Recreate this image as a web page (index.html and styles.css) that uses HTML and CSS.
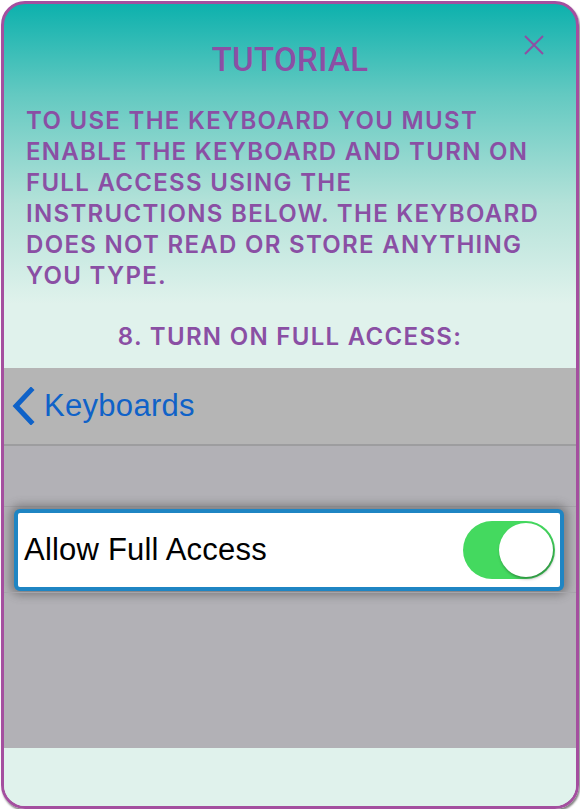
FILE: index.html
```html
<!DOCTYPE html>
<html>
<head>
<meta charset="utf-8">
<link rel="stylesheet" href="styles.css">
</head>
<body>
<div class="card">
  <div class="head">
    <h1 class="title">TUTORIAL</h1>
    <button class="close" aria-label="Close">
      <svg width="22" height="22" viewBox="0 0 22 22"><path d="M2 2 L20 20 M20 2 L2 20" stroke="#8e4fa3" stroke-width="2" fill="none"/></svg>
    </button>
  </div>
  <p class="intro">TO USE THE KEYBOARD YOU MUST ENABLE THE KEYBOARD AND TURN ON FULL ACCESS USING THE INSTRUCTIONS BELOW. THE KEYBOARD DOES NOT READ OR STORE ANYTHING YOU TYPE.</p>
  <p class="step">8. TURN ON FULL ACCESS:</p>
  <div class="shot">
    <div class="nav">
      <svg class="chev" width="26" height="38" viewBox="0 0 26 38"><path d="M21 3 L6 19 L21 35" stroke="#0f62c8" stroke-width="5" fill="none" stroke-linecap="square"/></svg>
      <span class="back">Keyboards</span>
    </div>
    <div class="gap"></div>
    <div class="row">
      <span class="label">Allow Full Access</span>
      <span class="toggle"><span class="knob"></span></span>
    </div>
    <div class="rest"></div>
  </div>
  <div class="foot"></div>
</div>
</body>
</html>
```

FILE: styles.css
```css
html, body { margin: 0; padding: 0; background: #ffffff; }
.card {
  margin: 1px 1px 0 1px;
  width: 578px;
  height: 808px;
  box-sizing: border-box;
  border: 3px solid #a44f9f;
  border-radius: 24px;
  overflow: hidden;
  background: linear-gradient(to bottom, #0db1ad 0px, #63c9c1 90px, #b4e2d9 200px, #e0f2ec 300px, #e0f2ec 100%);
  display: flex;
  flex-direction: column;
  font-family: "Inter", "Roboto", sans-serif;
  box-shadow: 1px 2px 2px rgba(0,0,0,0.5);
}
.head { position: relative; height: 101px; }
.title {
  margin: 0;
  padding-top: 37px;
  text-align: center;
  font-family: "Roboto", sans-serif;
  font-weight: 500;
  font-size: 33px;
  line-height: 38px;
  color: #8b4fa4;
  letter-spacing: 0.3px;
}
.close {
  position: absolute;
  right: 31px;
  top: 30px;
  border: 0;
  background: none;
  padding: 0;
  width: 22px;
  height: 22px;
}
.intro {
  margin: 0;
  padding: 0 30px 0 22px;
  font-weight: 600;
  font-size: 24px;
  line-height: 31px;
  letter-spacing: 1.3px;
  color: #8a4fa4;
}
.step {
  margin: 30px 0 0;
  text-align: center;
  font-weight: 600;
  font-size: 24px;
  line-height: 31px;
  letter-spacing: 1.3px;
  color: #8a4fa4;
  height: 31px;
}
.shot {
  margin-top: 16px;
  height: 380px;
  display: flex;
  flex-direction: column;
  background: #b2b1b6;
}
.nav {
  background: #b5b5b5;
  border-bottom: 2px solid #9d9d9f;
  display: flex;
  align-items: center;
  padding-left: 6px;
  box-sizing: border-box;
  height: 78px;
}
.back {
  margin-left: 8px;
  font-family: "Liberation Sans", "Arimo", sans-serif;
  font-size: 31px;
  color: #0f62c8;
  letter-spacing: 0.3px;
}
.gap { height: 60px; border-bottom: 1px solid #a6a5aa; }
.row {
  margin: 2px 12px 0 10px;
  height: 82px;
  box-sizing: border-box;
  border: 4px solid #1f85c3;
  border-radius: 6px;
  background: #ffffff;
  display: flex;
  align-items: center;
  justify-content: space-between;
  padding: 0 5px 0 6px;
  box-shadow: 0 0 10px 4px rgba(60,60,60,0.45);
}
.label {
  font-family: "Liberation Sans", "Arimo", sans-serif;
  font-size: 31px;
  color: #000000;
  letter-spacing: 0.2px;
}
.toggle {
  width: 92px;
  height: 58px;
  border-radius: 29px;
  background: #44d95f;
  display: flex;
  align-items: center;
  justify-content: flex-end;
}
.knob {
  width: 54px;
  height: 54px;
  border-radius: 50%;
  background: #ffffff;
  margin-right: 2px;
  box-shadow: 1px 2px 3px rgba(0,0,0,0.35);
}
.rest { flex: 1; border-top: 1px solid #a6a5aa; margin-top: 1px; }
.foot { flex: 1; background: #e0f2ec; }
```
